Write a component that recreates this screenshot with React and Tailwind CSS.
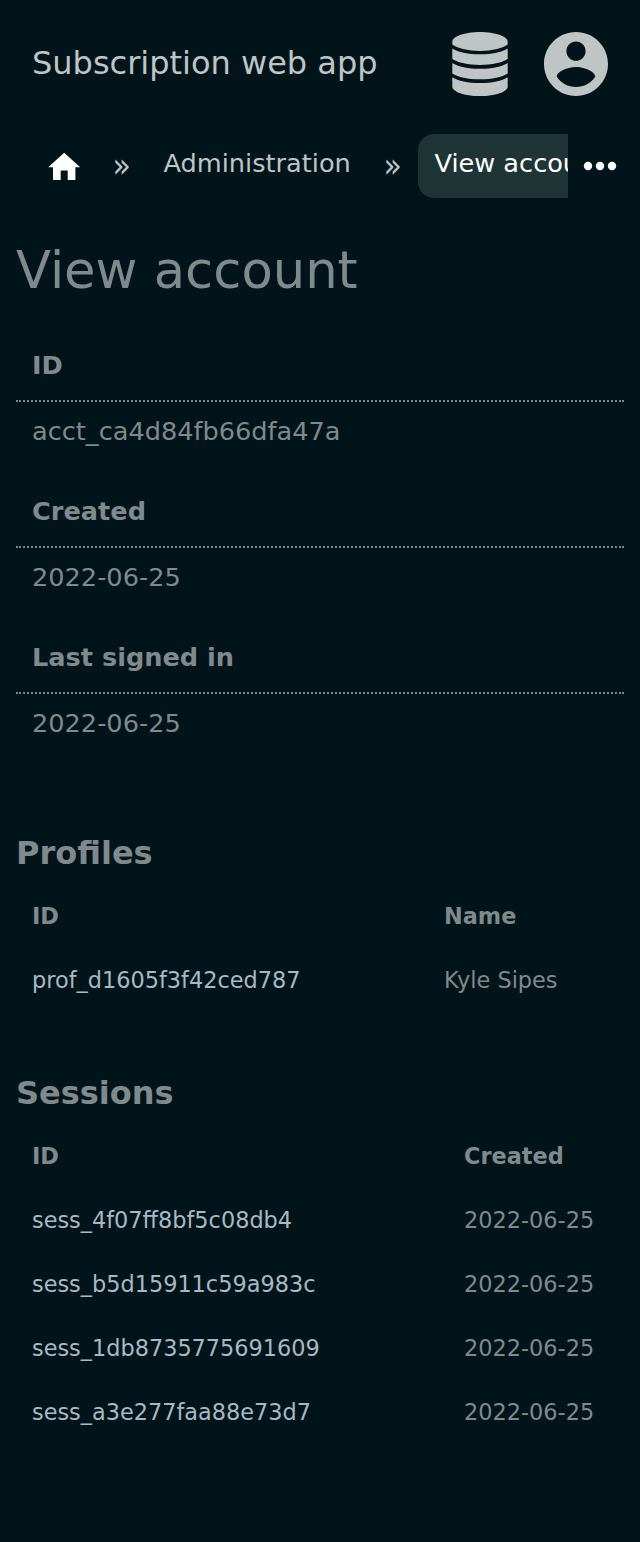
import React from 'react';

const details = [
  ['ID', 'acct_ca4d84fb66dfa47a'],
  ['Created', '2022-06-25'],
  ['Last signed in', '2022-06-25'],
];

const profiles = [['prof_d1605f3f42ced787', 'Kyle Sipes']];

const sessions = [
  ['sess_4f07ff8bf5c08db4', '2022-06-25'],
  ['sess_b5d15911c59a983c', '2022-06-25'],
  ['sess_1db8735775691609', '2022-06-25'],
  ['sess_a3e277faa88e73d7', '2022-06-25'],
];

function Header() {
  return (
    <header className="flex h-32 items-center px-8 text-[#bfc4c5]">
      <span className="flex-1 pb-0.5 text-[32px] leading-[48px]">Subscription web app</span>
      <svg className="mr-8 h-16 w-16" viewBox="0 0 64 64" fill="currentColor">
        <path d="M32 0C47 0 59.7 4.3 59.7 9.8V12.6C54 16.6 44 18.9 32 18.9S10 16.6 4.3 12.6V9.8C4.3 4.3 17 0 32 0z" />
        <path d="M4.3 16.4C10 20.2 20 22.3 32 22.3S54 20.2 59.7 16.4V27.1C54 30.8 44 32.9 32 32.9S10 30.8 4.3 27.1z" />
        <path d="M4.3 30.9C10 34.6 20 36.7 32 36.7S54 34.6 59.7 30.9V41.5C54 45.2 44 47.3 32 47.3S10 45.2 4.3 41.5z" />
        <path d="M4.3 45.3C10 49 20 51.1 32 51.1S54 49 59.7 45.3V54.4C59.7 59.8 47 64 32 64S4.3 59.8 4.3 54.4z" />
      </svg>
      <svg className="h-16 w-16" viewBox="2 2 20 20" fill="currentColor">
        <path d="M12 2C6.48 2 2 6.48 2 12s4.48 10 10 10 10-4.48 10-10S17.52 2 12 2zm0 3c1.66 0 3 1.34 3 3s-1.34 3-3 3-3-1.34-3-3 1.34-3 3-3zm0 14.2c-2.5 0-4.71-1.28-6-3.22.03-1.99 4-3.08 6-3.08 1.99 0 5.97 1.09 6 3.08-1.29 1.94-3.5 3.22-6 3.22z" />
      </svg>
    </header>
  );
}

function Breadcrumbs() {
  return (
    <nav className="mt-1.5 flex h-16 items-stretch text-[25.6px] text-[#bfc4c5]">
      <div className="flex w-[568px] overflow-hidden whitespace-nowrap">
        <a className="ml-8 flex w-16 shrink-0 items-center justify-center pt-0.5 text-white">
          <svg className="h-[38.4px] w-[38.4px]" viewBox="0 0 24 24" fill="currentColor">
            <path d="M9.8 20v-6h4.4v6H19v-8h3L12 3 2 12h3v8z" />
          </svg>
        </a>
        <span className="w-[51.5px] shrink-0 scale-y-110 text-center text-[30px] leading-[63px]">»</span>
        <a className="w-[220px] shrink-0 px-4 leading-[59px]">Administration</a>
        <span className="w-[50.5px] shrink-0 scale-y-110 text-center text-[30px] leading-[63px]">»</span>
        <a className="shrink-0 rounded-2xl bg-[#1f3535] pl-[16.5px] pr-4 leading-[59px] text-white">View account</a>
      </div>
      <button className="flex w-16 items-center justify-center text-white">
        <svg className="h-12 w-12" viewBox="0 0 24 24" fill="currentColor">
          <circle cx="6" cy="12" r="2.1" />
          <circle cx="12" cy="12" r="2.1" />
          <circle cx="18" cy="12" r="2.1" />
        </svg>
      </button>
    </nav>
  );
}

function DataTable({ title, heads, rows, columns }) {
  return (
    <section className="mb-[49px]">
      <h2 className="h-[63px] text-[32px] font-bold leading-[64px]">{title}</h2>
      <div className={`grid text-[22.4px] leading-[64px] ${columns}`}>
        {heads.map((head) => (
          <div key={head} className="h-16 pl-4 font-bold">{head}</div>
        ))}
        {rows.map(([id, value]) => (
          <React.Fragment key={id}>
            <a className="h-16 pl-4 text-[#a9b9c4]">{id}</a>
            <div className="h-16 pl-4">{value}</div>
          </React.Fragment>
        ))}
      </div>
    </section>
  );
}

export default function App() {
  return (
    <div className="min-h-[1542px] bg-[#001419] font-['DejaVu_Sans',sans-serif] text-[#80898b]">
      <Header />
      <Breadcrumbs />
      <main className="px-4 pt-8">
        <h1 className="h-20 text-[51.2px] leading-[80px]">View account</h1>
        <dl className="pt-5 text-[25.6px]">
          {details.map(([term, value]) => (
            <div key={term} className="h-[146px]">
              <dt className="h-[72px] border-b-2 border-dotted border-[#80898b] px-4 font-bold leading-[70px]">{term}</dt>
              <dd className="px-4 leading-[58px]">{value}</dd>
            </div>
          ))}
        </dl>
        <div className="pt-[53px]">
          <DataTable title="Profiles" heads={['ID', 'Name']} rows={profiles} columns="grid-cols-[412px_1fr]" />
          <DataTable title="Sessions" heads={['ID', 'Created']} rows={sessions} columns="grid-cols-[432px_1fr]" />
        </div>
      </main>
    </div>
  );
}
